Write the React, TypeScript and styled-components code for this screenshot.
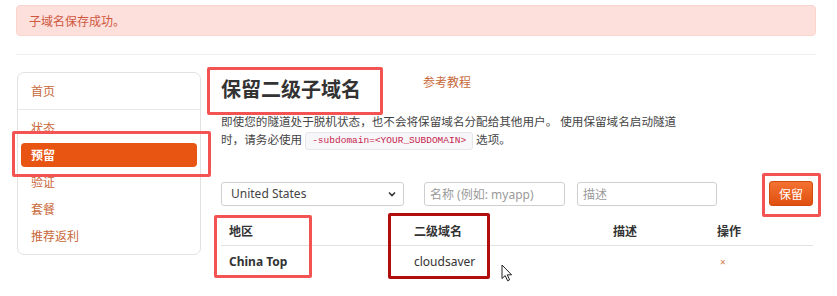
import styled, { createGlobalStyle } from 'styled-components';

const GlobalStyle = createGlobalStyle`
  html, body {
    margin: 0;
    padding: 0;
    background: #fff;
  }
  body {
    font-family: "Noto Sans", "Noto Sans CJK SC", sans-serif;
    color: #333;
  }
`;

const navItems = ['状态', '预留', '验证', '套餐', '推荐返利'];

const columns = [
  { label: '地区', width: 185 },
  { label: '二级域名', width: 199 },
  { label: '描述', width: 104 },
  { label: '操作', width: 104 },
];

const marks = [
  { x: 12, y: 131, w: 199, h: 46, dark: false },
  { x: 207, y: 67, w: 176, h: 48, dark: false },
  { x: 762, y: 173, w: 59, h: 44, dark: false },
  { x: 214, y: 215, w: 98, h: 63, dark: false },
  { x: 388, y: 213, w: 102, h: 66, dark: true },
];

const App = () => {
  return (
    <Page>
      <GlobalStyle />
      <Alert>子域名保存成功。</Alert>
      <Divider />
      <Main>
        <Sidebar>
          <HomeItem>首页</HomeItem>
          <NavList>
            {navItems.map((item) => (
              <NavItem key={item} active={item === '预留'}>
                {item}
              </NavItem>
            ))}
          </NavList>
        </Sidebar>
        <Content>
          <TitleRow>
            <Title>保留二级子域名</Title>
            <HelpLink>参考教程</HelpLink>
          </TitleRow>
          <Description>
            即使您的隧道处于脱机状态，也不会将保留域名分配给其他用户。 使用保留域名启动隧道
            <br />
            时，请务必使用 <Code>-subdomain=&lt;YOUR_SUBDOMAIN&gt;</Code> 选项。
          </Description>
          <FormRow>
            <Select>
              <span>United States</span>
              <svg width="10" height="10" viewBox="0 0 10 10">
                <path d="M2 3.5 L5 6.5 L8 3.5" fill="none" stroke="#333" strokeWidth="1.6" />
              </svg>
            </Select>
            <Input width={141} style={{ marginLeft: 20 }}>名称 (例如: myapp)</Input>
            <Input width={140} style={{ marginLeft: 12 }}>描述</Input>
            <SaveButton>保留</SaveButton>
          </FormRow>
          <Table>
            <HeadRow>
              {columns.map((c) => (
                <HeadCell key={c.label} width={c.width}>
                  {c.label}
                </HeadCell>
              ))}
            </HeadRow>
            <BodyRow>
              <Cell width={185} bold>China Top</Cell>
              <Cell width={199}>cloudsaver</Cell>
              <Cell width={104} />
              <Cell width={104}>
                <Remove>×</Remove>
              </Cell>
            </BodyRow>
          </Table>
        </Content>
      </Main>
      {marks.map((m, i) => (
        <Mark
          key={i}
          dark={m.dark}
          style={{ left: m.x, top: m.y, width: m.w, height: m.h }}
        />
      ))}
      <Cursor width="12" height="18" viewBox="0 0 12 18">
        <path
          d="M1 1 L1 14.5 L4.2 11.6 L6.6 16.8 L8.6 15.9 L6.3 10.8 L10.6 10.8 Z"
          fill="#fff"
          stroke="#222"
          strokeWidth="1"
          strokeLinejoin="round"
        />
      </Cursor>
    </Page>
  );
};

export default App;

const Page = styled.div`
  position: relative;
  width: 837px;
  height: 296px;
  padding: 5px 21px 0 16px;
  box-sizing: border-box;
  overflow: hidden;
`;

const Alert = styled.div`
  height: 31px;
  box-sizing: border-box;
  display: flex;
  align-items: center;
  padding-left: 12px;
  background: #fde0db;
  border: 1px solid #f9d5ce;
  border-radius: 4px;
  color: #d0573f;
  font-size: 12px;
`;

const Divider = styled.div`
  margin-top: 18px;
  border-top: 1px solid #eeeeee;
`;

const Main = styled.div`
  display: flex;
  margin-top: 17px;
`;

const Sidebar = styled.div`
  width: 184px;
  height: 183px;
  box-sizing: border-box;
  margin-left: 1px;
  border: 1px solid #e2e2e2;
  border-radius: 7px;
  display: flex;
  flex-direction: column;
`;

const HomeItem = styled.div`
  height: 36px;
  display: flex;
  align-items: center;
  padding-left: 13px;
  font-size: 12px;
  color: #c8683a;
  border-bottom: 1px solid #e8e8e8;
`;

const NavList = styled.div`
  display: flex;
  flex-direction: column;
  padding: 4px 3px 0 3px;
`;

const NavItem = styled.div<{ active?: boolean }>`
  height: 24px;
  margin: 1.5px 0;
  display: flex;
  align-items: center;
  padding-left: 10px;
  font-size: 12px;
  border-radius: 4px;
  color: ${(p) => (p.active ? '#fff' : '#c8683a')};
  background: ${(p) => (p.active ? '#e85411' : 'transparent')};
  font-weight: ${(p) => (p.active ? 600 : 400)};
`;

const Content = styled.div`
  width: 592px;
  margin-left: 20px;
  display: flex;
  flex-direction: column;
`;

const TitleRow = styled.div`
  display: flex;
  align-items: flex-start;
  margin-top: 3px;
`;

const Title = styled.h1`
  width: 202px;
  margin: 0;
  font-size: 20px;
  line-height: 30px;
  font-weight: 700;
  color: #333;
`;

const HelpLink = styled.a`
  margin-top: 0;
  font-size: 12px;
  line-height: 16px;
  color: #c8683a;
`;

const Description = styled.p`
  margin: 8px 0 0 0;
  font-size: 11.6px;
  line-height: 18px;
  color: #444;
  white-space: nowrap;
`;

const Code = styled.code`
  display: inline-block;
  height: 18px;
  line-height: 16px;
  box-sizing: border-box;
  padding: 0 6px;
  background: #f7f7f9;
  border: 1px solid #e5e5ea;
  border-radius: 3px;
  color: #c7254e;
  font-family: "Liberation Mono", monospace;
  font-size: 9.5px;
  vertical-align: middle;
`;

const FormRow = styled.div`
  display: flex;
  align-items: center;
  margin-top: 32px;
  height: 24px;
`;

const Select = styled.div`
  width: 183px;
  height: 24px;
  box-sizing: border-box;
  display: flex;
  align-items: center;
  justify-content: space-between;
  padding: 0 6px 0 9px;
  border: 1px solid #cfcfcf;
  border-radius: 3px;
  font-size: 12px;
  color: #444;
`;

const Input = styled.div<{ width: number }>`
  width: ${(p) => p.width}px;
  height: 24px;
  box-sizing: border-box;
  display: flex;
  align-items: center;
  padding-left: 5px;
  border: 1px solid #cfcfcf;
  border-radius: 3px;
  font-size: 12px;
  color: #9a9a9a;
`;

const SaveButton = styled.button`
  margin-left: auto;
  width: 44px;
  height: 25px;
  border: 1px solid #d24d0c;
  border-radius: 3px;
  background: linear-gradient(#f47232, #df500f);
  color: #fff;
  font-family: "Noto Sans CJK SC", sans-serif;
  font-size: 12px;
  padding: 0;
`;

const Table = styled.div`
  margin-top: 11px;
  display: flex;
  flex-direction: column;
`;

const HeadRow = styled.div`
  display: flex;
  height: 28px;
  align-items: center;
  border-bottom: 1px solid #e2e2e2;
`;

const HeadCell = styled.div<{ width: number }>`
  width: ${(p) => p.width}px;
  padding-left: 8px;
  box-sizing: border-box;
  font-size: 12px;
  font-weight: 700;
  color: #333;
`;

const BodyRow = styled.div`
  display: flex;
  height: 31px;
  align-items: center;
`;

const Cell = styled.div<{ width: number; bold?: boolean }>`
  width: ${(p) => p.width}px;
  padding-left: 8px;
  box-sizing: border-box;
  font-size: 12px;
  font-weight: ${(p) => (p.bold ? 700 : 400)};
  color: #333;
`;

const Remove = styled.span`
  margin-left: 3px;
  font-size: 10px;
  color: #d0783e;
`;

const Mark = styled.div<{ dark?: boolean }>`
  position: absolute;
  box-sizing: border-box;
  border: 3px solid ${(p) => (p.dark ? '#b10d0d' : '#f45353')};
  border-radius: 2px;
  pointer-events: none;
`;

const Cursor = styled.svg`
  position: absolute;
  left: 501px;
  top: 264px;
`;
